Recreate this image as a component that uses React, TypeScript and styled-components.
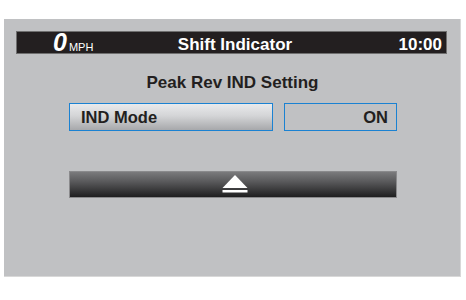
import styled, { createGlobalStyle } from "styled-components";

const GlobalStyle = createGlobalStyle`
    body {
        margin: 0;
        background: #ffffff;
        font-family: "Liberation Sans", Arial, sans-serif;
    }
`;

const Screen = styled.div`
    margin: 19px 0 0 4px;
    width: 457px;
    height: 258px;
    box-sizing: border-box;
    background: #c0c1c3;
    border-right: 1px solid #d8d8d8;
    border-bottom: 1px solid #d8d8d8;
    padding: 12px 13px 0 12px;
`;

const StatusBar = styled.div`
    height: 23px;
    box-sizing: border-box;
    background: #231f20;
    border: 1px solid #6f6f6f;
    display: grid;
    grid-template-columns: 1fr auto 1fr;
    align-items: center;
    color: #ffffff;
    font-weight: bold;
    font-size: 17px;
    line-height: 20px;
    padding: 0 4px 0 11px;
`;

const Speed = styled.div`
    display: flex;
    align-items: baseline;
    gap: 2px;
    margin-left: 25px;
`;

const SpeedValue = styled.span`
    font-size: 25px;
    font-style: italic;
    font-weight: bold;
    line-height: 20px;
`;

const SpeedUnit = styled.span`
    font-size: 11px;
    font-weight: normal;
`;

const Clock = styled.div`
    justify-self: end;
`;

const Title = styled.div`
    margin-top: 19px;
    text-align: center;
    font-size: 17px;
    line-height: 19px;
    font-weight: bold;
    color: #231f20;
    padding-left: 2px;
`;

const Row = styled.div`
    margin: 11px 0 0 53px;
    display: flex;
    gap: 11px;
`;

const Button = styled.div<{ $width: number; $raised?: boolean }>`
    width: ${p => p.$width}px;
    height: 28px;
    box-sizing: border-box;
    border: 1px solid #1b82d2;
    background: ${p => p.$raised
        ? "linear-gradient(#e9eaec, #d4d5d7 45%, #a7a8ab)"
        : "#c0c1c3"};
    display: flex;
    align-items: center;
    justify-content: ${p => p.$raised ? "flex-start" : "flex-end"};
    padding: 0 8px 0 11px;
    font-size: 16.5px;
    font-weight: bold;
    color: #231f20;
`;

const EjectBar = styled.div`
    margin: 40px 0 0 53px;
    width: 328px;
    height: 27px;
    box-sizing: border-box;
    border: 1px solid #8a8a8c;
    background: linear-gradient(#7a7a7c, #58585a 40%, #1e1e1f);
    display: flex;
    justify-content: center;
    align-items: center;
    padding-left: 4px;
`;

function EjectIcon() {
    return (
        <svg width="26" height="19" viewBox="0 0 26 19">
            <polygon points="13,0 25.5,13 0.5,13" fill="#ffffff" />
            <rect x="0.5" y="15" width="25" height="2.5" fill="#ffffff" />
        </svg>
    );
}

function App() {
    return (
        <>
            <GlobalStyle />
            <Screen>
                <StatusBar>
                    <Speed>
                        <SpeedValue>0</SpeedValue>
                        <SpeedUnit>MPH</SpeedUnit>
                    </Speed>
                    <div>Shift Indicator</div>
                    <Clock>10:00</Clock>
                </StatusBar>
                <Title>Peak Rev IND Setting</Title>
                <Row>
                    <Button $width={204} $raised>IND Mode</Button>
                    <Button $width={113}>ON</Button>
                </Row>
                <EjectBar>
                    <EjectIcon />
                </EjectBar>
            </Screen>
        </>
    );
}

export default App;
